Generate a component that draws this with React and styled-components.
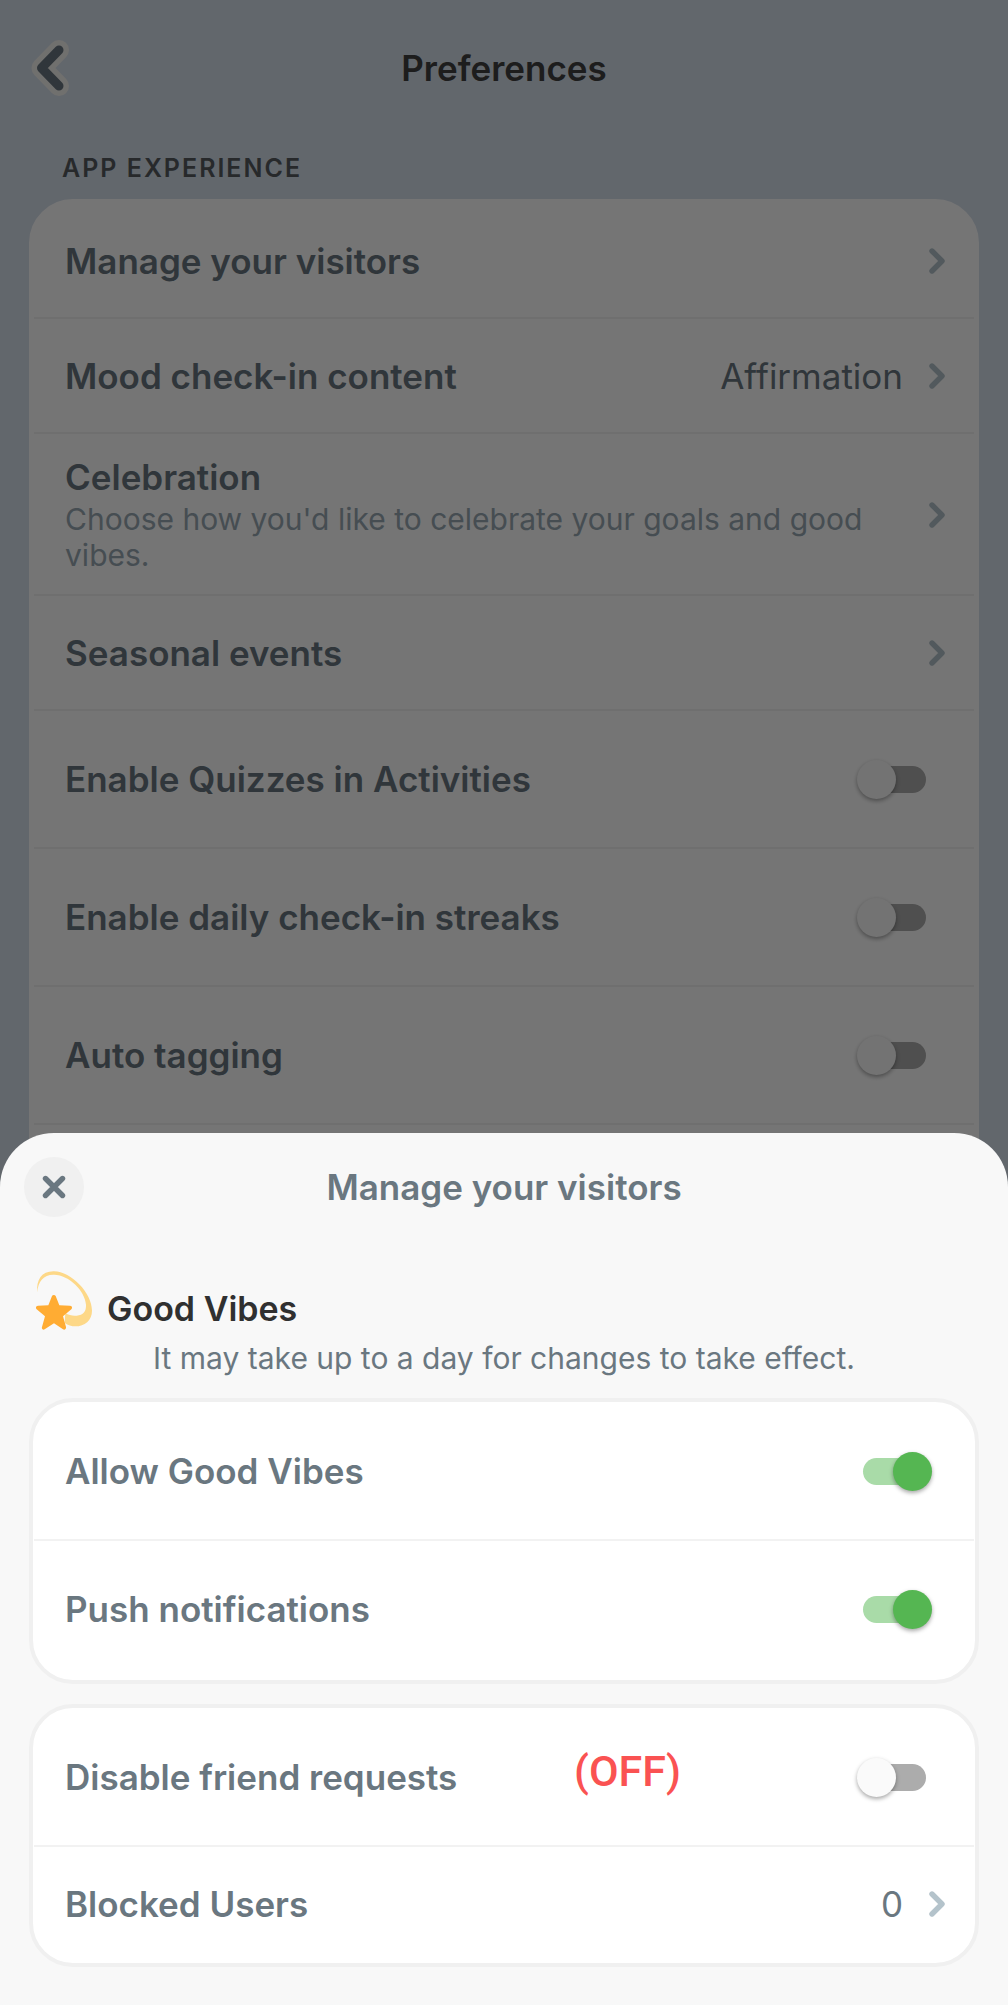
import { useState } from 'react'
import styled, { createGlobalStyle } from 'styled-components'

const experienceRows = [
  { label: 'Manage your visitors' },
  { label: 'Mood check-in content', value: 'Affirmation' },
  {
    label: 'Celebration',
    text: "Choose how you'd like to celebrate your goals and good vibes.",
  },
  { label: 'Seasonal events' },
]

const experienceToggles = [
  'Enable Quizzes in Activities',
  'Enable daily check-in streaks',
  'Auto tagging',
]

const Chevron = () => (
  <svg width='16' height='26' viewBox='0 0 16 26' fill='none' aria-hidden='true'>
    <path
      d='M3 3 L13 13 L3 23'
      stroke='#b4c3cb'
      strokeWidth='5.4'
      strokeLinecap='round'
      strokeLinejoin='round'
    />
  </svg>
)

const BackIcon = () => (
  <svg width='38' height='56' viewBox='0 0 38 56' fill='none' aria-hidden='true'>
    <g strokeLinecap='round' strokeLinejoin='round'>
      <path d='M28 10 L10.5 28 L28 46' stroke='#f4f3f0' strokeWidth='20' />
      <path d='M28 10 L10.5 28 L28 46' stroke='#6a7780' strokeWidth='9' />
    </g>
  </svg>
)

const CloseIcon = () => (
  <svg width='24' height='24' viewBox='0 0 24 24' fill='none' aria-hidden='true'>
    <path
      d='M3.5 3.5 L20.5 20.5 M20.5 3.5 L3.5 20.5'
      stroke='#6a7780'
      strokeWidth='5.4'
      strokeLinecap='round'
    />
  </svg>
)

const DizzyStar = () => (
  <svg width='56' height='60' viewBox='0 0 168 180' aria-hidden='true'>
    <path
      d='M4 64 C0 26 18 0 54 1 C106 2 168 66 168 119 C168 148 146 166 118 166 C107 166 96 163 86 156 L88 126 C98 133 110 135 122 134 C142 132 151 121 150 101 C147 60 100 12 54 11 C24 10 6 30 4 64 Z'
      fill='#fdd888'
    />
    <path
      d='M48 75 C50 71 57 71 59 75 L70 103 L102 104 C108 104 110 111 106 115 L81 136 L90 168 C91 174 86 178 81 175 L54 157 L26 175 C21 178 16 174 18 168 L27 136 L2 115 C-2 111 0 104 6 104 L37 103 Z'
      fill='#ffac33'
    />
  </svg>
)

const LinkRow = ({ label, value, text }) => (
  <Row as='button' type='button' $tall={Boolean(text)}>
    <RowText>
      <Label>{label}</Label>
      {text && <Description>{text}</Description>}
    </RowText>
    {value && <Value>{value}</Value>}
    <Chevron />
  </Row>
)

const ToggleRow = ({ label, note, defaultOn = false }) => {
  const [on, setOn] = useState(defaultOn)
  return (
    <Row as='label' $toggle>
      <Label>{label}</Label>
      {note && <Note>{note}</Note>}
      <Switch
        type='checkbox'
        role='switch'
        checked={on}
        onChange={(e) => setOn(e.target.checked)}
      />
    </Row>
  )
}

const App = () => {
  return (
    <>
      <GlobalStyle />
      <Page>
        <Header>
          <BackButton type='button' aria-label='Back'>
            <BackIcon />
          </BackButton>
          <h1>Preferences</h1>
        </Header>
        <SectionTitle>APP EXPERIENCE</SectionTitle>
        <Card $grow>
          {experienceRows.map((row) => (
            <LinkRow key={row.label} {...row} />
          ))}
          {experienceToggles.map((label) => (
            <ToggleRow key={label} label={label} />
          ))}
        </Card>
      </Page>
      <Overlay>
        <Sheet role='dialog' aria-labelledby='sheet-title'>
          <SheetHeader>
            <CloseButton type='button' aria-label='Close'>
              <CloseIcon />
            </CloseButton>
            <h2 id='sheet-title'>Manage your visitors</h2>
          </SheetHeader>
          <GroupTitle>
            <DizzyStar />
            <h3>Good Vibes</h3>
          </GroupTitle>
          <Hint>It may take up to a day for changes to take effect.</Hint>
          <Cards>
            <Card>
              <ToggleRow label='Allow Good Vibes' defaultOn />
              <ToggleRow label='Push notifications' defaultOn />
            </Card>
            <Card>
              <ToggleRow label='Disable friend requests' note='(OFF)' />
              <LinkRow label='Blocked Users' value='0' />
            </Card>
          </Cards>
        </Sheet>
      </Overlay>
    </>
  )
}

const GlobalStyle = createGlobalStyle`
  * {
    box-sizing: border-box;
    margin: 0;
    padding: 0;
  }
  body {
    background: #d6e0ec;
    color: #6a7780;
    font-family: Inter, Roboto, 'Liberation Sans', sans-serif;
    font-size: 35px;
    line-height: 40px;
  }
  button {
    border: none;
    background: none;
    color: inherit;
    font: inherit;
    text-align: left;
    cursor: pointer;
  }
  h1, h2, h3 {
    font-size: 35px;
    font-weight: 600;
  }
  svg {
    display: block;
    flex-shrink: 0;
  }
`

const Page = styled.main`
  display: flex;
  flex-direction: column;
  height: 100vh;
  padding: 0 29px;
  overflow: hidden;
`

const Header = styled.header`
  display: grid;
  grid-template-columns: 60px 1fr 60px;
  align-items: center;
  flex-shrink: 0;
  height: 136px;
  h1 {
    color: #404040;
    text-align: center;
  }
`

const BackButton = styled.button`
  padding-left: 2px;
`

const SectionTitle = styled.h2`
  flex-shrink: 0;
  padding: 16px 33px 15px;
  color: #555b5e;
  font-size: 25px;
  line-height: 32px;
  letter-spacing: 2px;
`

const Card = styled.section`
  flex: ${({ $grow }) => ($grow ? '1 0 auto' : 'none')};
  padding: 1px;
  border: 4px solid ${({ $grow }) => ($grow ? '#fff' : '#f0f0f0')};
  border-radius: 44px;
  background: #fff;
  & > :last-child {
    border-bottom-color: ${({ $grow }) => ($grow ? '#f2f2f2' : 'transparent')};
  }
`

const Row = styled.div`
  position: relative;
  display: flex;
  align-items: center;
  justify-content: space-between;
  width: 100%;
  height: ${({ $tall, $toggle }) => ($tall ? 162 : $toggle ? 138 : 115)}px;
  padding: ${({ $tall }) => ($tall ? 2 : 0)}px
    ${({ $toggle }) => ($toggle ? 42 : 29)}px 0 31px;
  border-bottom: 2px solid #f2f2f2;
  cursor: pointer;
`

const RowText = styled.span`
  display: flex;
  flex: 1;
  flex-direction: column;
  gap: 4px;
`

const Label = styled.span`
  font-weight: 600;
`

const Description = styled.span`
  max-width: 810px;
  color: #98a9b3;
  font-size: 30px;
  line-height: 36px;
`

const Value = styled.span`
  margin-right: 26px;
`

const Note = styled.strong`
  position: absolute;
  top: 40px;
  right: 293px;
  color: #fa5252;
  font-family: Roboto, sans-serif;
  font-size: 43px;
  font-weight: 500;
  line-height: 44px;
`

const Switch = styled.input`
  display: grid;
  align-items: center;
  flex-shrink: 0;
  width: 75px;
  height: 39px;
  appearance: none;
  cursor: pointer;
  &::before,
  &::after {
    content: '';
    grid-area: 1 / 1;
  }
  &::before {
    height: 27px;
    margin: 0 6px;
    border-radius: 14px;
    background: #acacac;
  }
  &::after {
    width: 39px;
    height: 39px;
    border-radius: 50%;
    background: #fafafa;
    box-shadow: 0 2px 4px rgba(0, 0, 0, 0.35);
  }
  &:checked::before {
    background: #a9dba8;
  }
  &:checked::after {
    justify-self: end;
    background: #55b652;
  }
`

const Overlay = styled.div`
  position: fixed;
  inset: 0;
  display: flex;
  align-items: flex-end;
  background: rgba(0, 0, 0, 0.54);
`

const Sheet = styled.div`
  width: 100%;
  padding: 24px 29px 38px;
  border-radius: 54px 54px 0 0;
  background: #f8f8f8;
`

const SheetHeader = styled.header`
  display: grid;
  grid-template-columns: 60px 1fr 60px;
  align-items: center;
  margin: 0 -5px 54px;
  h2 {
    text-align: center;
  }
`

const CloseButton = styled.button`
  display: grid;
  place-items: center;
  width: 60px;
  height: 60px;
  border-radius: 50%;
  background: #f0f0f0;
`

const GroupTitle = styled.div`
  display: flex;
  align-items: flex-end;
  gap: 15px;
  padding-left: 7px;
  h3 {
    color: #303030;
    font-size: 34px;
    line-height: 44px;
  }
`

const Hint = styled.p`
  margin: 9px 0 22px;
  font-size: 30px;
  line-height: 36px;
  text-align: center;
`

const Cards = styled.div`
  display: flex;
  flex-direction: column;
  gap: 20px;
`

export default App
